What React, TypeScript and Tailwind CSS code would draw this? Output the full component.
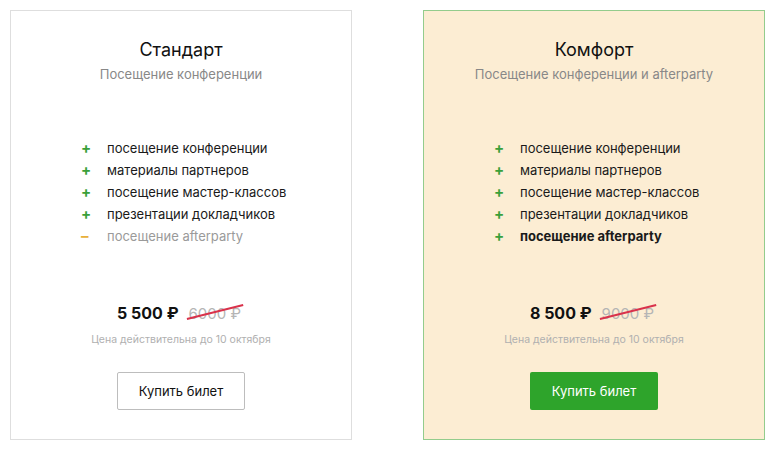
import React from "react";

type Feature = { text: string; on: boolean; bold?: boolean };

const base = [
  "посещение конференции",
  "материалы партнеров",
  "посещение мастер-классов",
  "презентации докладчиков",
];

function Plan({
  title,
  subtitle,
  features,
  price,
  oldPrice,
  accent,
}: {
  title: string;
  subtitle: string;
  features: Feature[];
  price: string;
  oldPrice: string;
  accent?: boolean;
}) {
  return (
    <div
      className={`flex w-[342px] h-[430px] flex-col items-center border ${
        accent ? "border-[#93cc8c] bg-[#fcedd3]" : "border-[#dedede] bg-white"
      }`}
    >
      <h2 className="mt-[28px] text-[18px] leading-[22px] text-[#111]">{title}</h2>
      <p className="mt-[5px] text-[13px] leading-[16px] text-[#888]">{subtitle}</p>
      <ul className="mt-[58px] flex flex-col gap-[6px] self-start pl-[69px]">
        {features.map((f) => (
          <li key={f.text} className="flex items-center text-[13px] leading-[16px]">
            <span
              className={`w-[27px] pl-[1px] text-left text-[15px] font-bold ${
                f.on ? "text-[#3a9f3a]" : "text-[#e8b03a]"
              }`}
            >
              {f.on ? "+" : "–"}
            </span>
            <span
              className={`${f.on ? "text-[#1a1a1a]" : "text-[#9a9a9a]"} ${
                f.bold ? "font-bold" : ""
              }`}
            >
              {f.text}
            </span>
          </li>
        ))}
      </ul>
      <div className="mt-[57px] flex items-baseline gap-[10px] pr-[4px]">
        <span className="text-[16px] font-bold text-[#111]">{price}</span>
        <span className="relative text-[15px] text-[#b5b5b5]">
          {oldPrice}
          <span className="absolute left-[-3px] top-[8px] h-[1.5px] w-[58px] -rotate-[14deg] bg-[#d9324b]" />
        </span>
      </div>
      <p className="mt-[6px] text-[10.5px] text-[#b0b0b0]">Цена действительна до 10 октября</p>
      <button
        className={`mt-[25px] h-[38px] w-[128px] text-[13px] ${
          accent
            ? "rounded-[2px] bg-[#2ea42b] text-white"
            : "rounded-[2px] border border-[#bdbdbd] bg-white text-[#111]"
        }`}
      >
        Купить билет
      </button>
    </div>
  );
}

export default function App() {
  return (
    <div
      className="flex h-[450px] w-[777px] gap-[71px] bg-white pl-[10px] pt-[10px]"
      style={{ fontFamily: "Inter, 'Noto Sans', sans-serif" }}
    >
      <Plan
        title="Стандарт"
        subtitle="Посещение конференции"
        features={[...base.map((t) => ({ text: t, on: true })), { text: "посещение afterparty", on: false }]}
        price="5 500 ₽"
        oldPrice="6000 ₽"
      />
      <Plan
        accent
        title="Комфорт"
        subtitle="Посещение конференции и afterparty"
        features={[...base.map((t) => ({ text: t, on: true })), { text: "посещение afterparty", on: true, bold: true }]}
        price="8 500 ₽"
        oldPrice="9000 ₽"
      />
    </div>
  );
}
